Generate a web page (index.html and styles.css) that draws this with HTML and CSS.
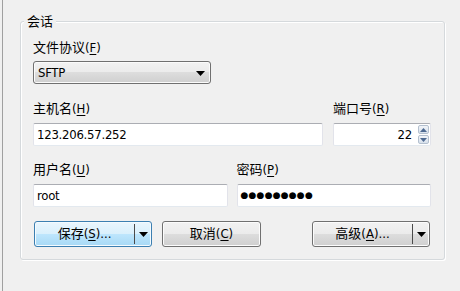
FILE: index.html
```html
<!DOCTYPE html>
<html lang="zh-CN">
<head>
<meta charset="utf-8">
<title>会话</title>
<link rel="stylesheet" href="styles.css">
</head>
<body>
<div class="panel">
  <fieldset class="group">
    <legend>会话</legend>
    <div class="content">
      <div class="row row-proto">
        <div class="field">
          <label class="lbl">文件协议(<u>F</u>)</label>
          <div class="combo">
            <span class="combo-text">SFTP</span>
            <svg class="tri" width="9" height="5" viewBox="0 0 9 5"><path d="M0 0H9L4.5 5Z" fill="#000"/></svg>
          </div>
        </div>
      </div>

      <div class="row row-host">
        <div class="field">
          <label class="lbl">主机名(<u>H</u>)</label>
          <input class="edit" type="text" value="123.206.57.252">
        </div>
        <div class="field">
          <label class="lbl">端口号(<u>R</u>)</label>
          <div class="edit spin">
            <span class="num">22</span>
            <div class="spin-btns">
              <span class="sb"><svg width="7" height="4" viewBox="0 0 7 4"><path d="M0 4H7L3.5 0Z" fill="#4e6a92"/></svg></span>
              <span class="sb"><svg width="7" height="4" viewBox="0 0 7 4"><path d="M0 0H7L3.5 4Z" fill="#4e6a92"/></svg></span>
            </div>
          </div>
        </div>
      </div>

      <div class="row row-user">
        <div class="field">
          <label class="lbl">用户名(<u>U</u>)</label>
          <input class="edit" type="text" value="root">
        </div>
        <div class="field">
          <label class="lbl">密码(<u>P</u>)</label>
          <div class="edit pw">●●●●●●●●●</div>
        </div>
      </div>

      <div class="buttons">
        <div class="btn split primary">
          <span class="btn-main">保存(<u>S</u>)...</span>
          <span class="sep"></span>
          <span class="btn-arr"><svg width="9" height="5" viewBox="0 0 9 5"><path d="M0 0H9L4.5 5Z" fill="#000"/></svg></span>
        </div>
        <div class="btn cancel">取消(<u>C</u>)</div>
        <div class="btn split adv">
          <span class="btn-main">高级(<u>A</u>)...</span>
          <span class="sep"></span>
          <span class="btn-arr"><svg width="9" height="5" viewBox="0 0 9 5"><path d="M0 0H9L4.5 5Z" fill="#000"/></svg></span>
        </div>
      </div>
    </div>
  </fieldset>
</div>
</body>
</html>
```

FILE: styles.css
```css
* { box-sizing: border-box; }
html, body { margin: 0; padding: 0; }
body {
  width: 460px;
  height: 291px;
  overflow: hidden;
  background: #f0f0f0;
  font-family: "DejaVu Sans Condensed", "Noto Sans CJK SC", sans-serif;
  font-size: 13px;
  color: #000;
}
u { text-decoration: underline; text-underline-offset: 2px; }

.panel {
  margin-left: 2px;
  border-left: 1px solid #a0a0a0;
  height: 291px;
  padding: 13px 0 0 17px;
}

.group {
  width: 425px;
  margin: 0;
  padding: 0;
  min-inline-size: 0;
  border: 1px solid #d5d9dc;
  border-radius: 3px;
  box-shadow: inset 1px 1px 0 #fff, 1px 1px 0 #fff;
}
.group legend {
  margin-left: 3px;
  padding: 0 3px;
  height: 17px;
  line-height: 17px;
  background: #f0f0f0;
}

.content { padding: 10px 13px 12px 12px; }

.lbl {
  display: block;
  height: 16px;
  line-height: 16px;
  margin-bottom: 6px;
  white-space: nowrap;
}
.row-proto .lbl { margin-bottom: 5px; }

.row { display: grid; }
.row-proto { grid-template-columns: 178px; }
.row-host { grid-template-columns: 1fr 98px; column-gap: 10px; margin-top: 17px; }
.row-user { grid-template-columns: 1fr 1fr; column-gap: 9px; margin-top: 16px; }

.combo {
  height: 23px;
  display: flex;
  align-items: center;
  justify-content: space-between;
  padding: 0 5px 0 4px;
  border: 1px solid #707070;
  border-radius: 3px;
  background: linear-gradient(#f2f2f2 0%, #ebebeb 50%, #dddddd 50%, #cfcfcf 100%);
  box-shadow: inset 0 0 0 1px #fbfbfb;
}
.combo-text { line-height: 16px; letter-spacing: -0.3px; }
.tri { display: block; margin-top: 1px; }

.edit {
  display: block;
  width: 100%;
  height: 23px;
  margin: 0;
  padding: 0 3px;
  font: inherit;
  letter-spacing: -0.25px;
  color: #000;
  background: #fff;
  border: 1px solid #e2e3ea;
  border-top-color: #abadb3;
  border-bottom-color: #e3e9ef;
  border-radius: 2px;
  outline: none;
  line-height: 21px;
}

.spin {
  display: flex;
  align-items: center;
  justify-content: flex-end;
  padding: 0 1px 0 3px;
}
.num { margin-right: 6px; line-height: 16px; }
.spin-btns {
  display: flex;
  flex-direction: column;
  gap: 1px;
}
.sb {
  width: 11px;
  height: 9px;
  display: flex;
  align-items: center;
  justify-content: center;
  border: 1px solid #b4c0cf;
  border-radius: 2px;
  background: linear-gradient(#f1f4f8, #d8e1ec);
}
.sb svg { display: block; }

.pw {
  font-family: "DejaVu Sans", sans-serif;
  font-size: 9px;
  letter-spacing: 0.2px;
  line-height: 21px;
  padding-left: 3px;
}

.buttons {
  display: flex;
  margin-top: 14px;
  height: 26px;
}
.btn {
  height: 26px;
  display: flex;
  align-items: center;
  justify-content: center;
  border: 1px solid #707070;
  border-radius: 3px;
  background: linear-gradient(#f2f2f2 0%, #ebebeb 50%, #dddddd 50%, #cfcfcf 100%);
  box-shadow: inset 0 0 0 1px #fcfcfc;
  line-height: 16px;
  white-space: nowrap;
}
.btn.primary {
  border-color: #3c7fb1;
  background: linear-gradient(#eaf6fd 0%, #d9f0fc 50%, #bee6fd 50%, #a7d9f5 100%);
  box-shadow: inset 0 0 0 1px #f4fbff;
}
.split { width: 118px; justify-content: flex-start; }
.primary { margin-left: 1px; }
.cancel { width: 99px; margin-left: 10px; }
.adv { margin-left: auto; margin-right: 1px; }
.btn-main { width: 99px; text-align: center; }
.sep {
  width: 1px;
  height: 20px;
  background: #4a4a4a;
}
.btn-arr {
  flex: 1;
  display: flex;
  justify-content: center;
  padding-top: 1px;
}
.btn-arr svg { display: block; }
```
